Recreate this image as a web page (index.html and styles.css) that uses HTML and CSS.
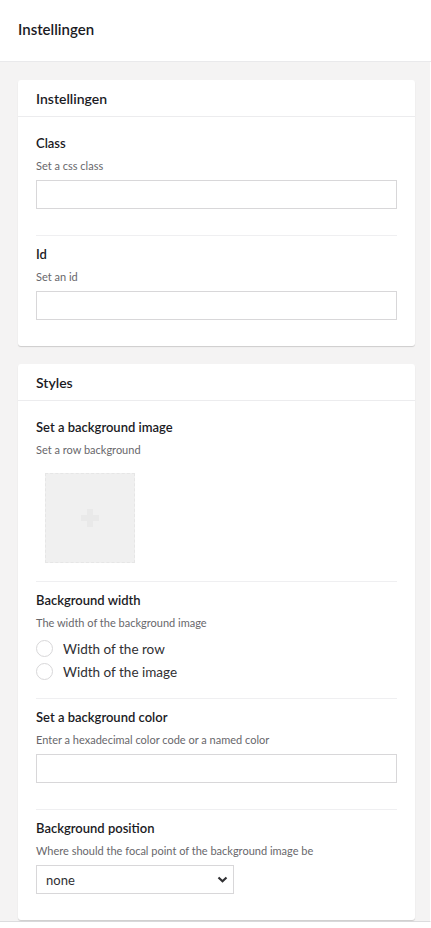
FILE: index.html
```html
<!DOCTYPE html>
<html lang="nl">

<head>
    <meta charset="UTF-8" />
    <meta name="viewport" content="width=device-width, initial-scale=1" />
    <title>Instellingen</title>
    <link rel="stylesheet" href="styles.css">
</head>

<body>
    <header class="panel-header">
        <h1>Instellingen</h1>
    </header>

    <main class="panel-body">
        <section class="box">
            <h2 class="box-title">Instellingen</h2>
            <div class="box-content">
                <div class="prop">
                    <label class="prop-label" for="cssClass">Class</label>
                    <p class="prop-desc">Set a css class</p>
                    <input type="text" id="cssClass" class="text-input" />
                </div>
                <div class="prop">
                    <label class="prop-label" for="elId">Id</label>
                    <p class="prop-desc">Set an id</p>
                    <input type="text" id="elId" class="text-input" />
                </div>
            </div>
        </section>

        <section class="box">
            <h2 class="box-title">Styles</h2>
            <div class="box-content">
                <div class="prop">
                    <div class="prop-label">Set a background image</div>
                    <p class="prop-desc">Set a row background</p>
                    <button class="image-picker" aria-label="Add image">
                        <span class="plus"></span>
                    </button>
                </div>
                <div class="prop prop-radios">
                    <div class="prop-label">Background width</div>
                    <p class="prop-desc">The width of the background image</p>
                    <ul class="radio-list">
                        <li>
                            <label class="radio">
                                <input type="radio" name="bgWidth" value="row" />
                                <span>Width of the row</span>
                            </label>
                        </li>
                        <li>
                            <label class="radio">
                                <input type="radio" name="bgWidth" value="image" />
                                <span>Width of the image</span>
                            </label>
                        </li>
                    </ul>
                </div>
                <div class="prop">
                    <label class="prop-label" for="bgColor">Set a background color</label>
                    <p class="prop-desc">Enter a hexadecimal color code or a named color</p>
                    <input type="text" id="bgColor" class="text-input" />
                </div>
                <div class="prop">
                    <label class="prop-label" for="bgPos">Background position</label>
                    <p class="prop-desc">Where should the focal point of the background image be</p>
                    <div class="select-wrap">
                        <select id="bgPos">
                            <option selected>none</option>
                            <option>top</option>
                            <option>center</option>
                            <option>bottom</option>
                        </select>
                        <svg class="chevron" width="11" height="7" viewBox="0 0 11 7" aria-hidden="true">
                            <path d="M1.5 1.5 L5.5 5.2 L9.5 1.5" fill="none" stroke="#303033" stroke-width="2.2" />
                        </svg>
                    </div>
                </div>
            </div>
        </section>
    </main>

    <footer class="panel-footer"></footer>
</body>

</html>
```

FILE: styles.css
```css
:root {
    --bg: #f4f3f3;
    --text: #1b1b1f;
    --muted: #68676b;
    --border: #d8d7d9;
    --line: #efeff1;
}

body {
    margin: 0;
    font-family: Lato, 'Open Sans', sans-serif;
    color: var(--text);
    background-color: #fff;
}

.panel-header {
    height: 61px;
    padding-left: 18px;
    display: flex;
    align-items: center;
    border-bottom: 1px solid #e9e9eb;
    background-color: #fff;
}

.panel-header h1 {
    margin: 0 0 3px;
    font-size: 15px;
    font-weight: 600;
}

.panel-body {
    background-color: var(--bg);
    padding: 18px 15px 1px 18px;
    border-right: 1px solid #fff;
    border-bottom: 1px solid #dcdcde;
    display: flex;
    flex-direction: column;
    gap: 18px;
}

.box {
    background-color: #fff;
    border-radius: 3px;
    box-shadow: 0 1px 1px rgba(0, 0, 0, 0.16);
}

.box-title {
    margin: 0;
    height: 36px;
    padding: 0 18px;
    display: flex;
    align-items: center;
    font-size: 14px;
    font-weight: 600;
    border-bottom: 1px solid #ececee;
}

.box-content {
    padding: 8px 18px 0;
}

.prop {
    padding: 8px 0 18px;
    border-bottom: 1px solid var(--line);
}

.prop:last-child {
    border-bottom: none;
}

.prop-radios {
    padding-bottom: 15px;
}

.prop-label {
    display: block;
    font-size: 13px;
    font-weight: 600;
    line-height: 20px;
}

.prop-desc {
    margin: 5px 0 0;
    font-size: 11px;
    line-height: 16px;
    color: var(--muted);
}

.text-input {
    display: block;
    box-sizing: border-box;
    width: 100%;
    height: 29px;
    margin: 6px 0 8px;
    padding: 0 8px;
    border: 1px solid var(--border);
    border-radius: 0;
    font-family: inherit;
    font-size: 14px;
}

.image-picker {
    display: flex;
    align-items: center;
    justify-content: center;
    box-sizing: border-box;
    width: 90px;
    height: 90px;
    margin: 15px 0 0 9px;
    padding: 0;
    background-color: #f0f0f0;
    border: 1px dashed #e6e6e6;
    cursor: pointer;
}

.plus {
    position: relative;
    width: 18px;
    height: 6px;
    background-color: #e9e9e9;
}

.plus::after {
    content: "";
    position: absolute;
    left: 6px;
    top: -6px;
    width: 6px;
    height: 18px;
    background-color: #e9e9e9;
}

.radio-list {
    list-style: none;
    margin: 6px 0 0;
    padding: 0;
}

.radio {
    display: flex;
    align-items: center;
    gap: 10px;
    height: 23px;
    font-size: 13.5px;
    color: #303033;
    cursor: pointer;
}

.radio input {
    appearance: none;
    margin: 0;
    width: 17px;
    height: 17px;
    border: 1px solid var(--border);
    border-radius: 50%;
    background-color: #fff;
}

.select-wrap {
    position: relative;
    width: 198px;
    margin: 6px 0 8px;
}

.select-wrap select {
    appearance: none;
    display: block;
    box-sizing: border-box;
    width: 100%;
    height: 29px;
    padding: 0 24px 0 9px;
    border: 1px solid var(--border);
    border-radius: 0;
    background-color: #fff;
    font-family: inherit;
    font-size: 13px;
    color: #303033;
}

.chevron {
    position: absolute;
    right: 6px;
    top: 11px;
    pointer-events: none;
}

.panel-footer {
    height: 6px;
    background-color: #fff;
}
```
